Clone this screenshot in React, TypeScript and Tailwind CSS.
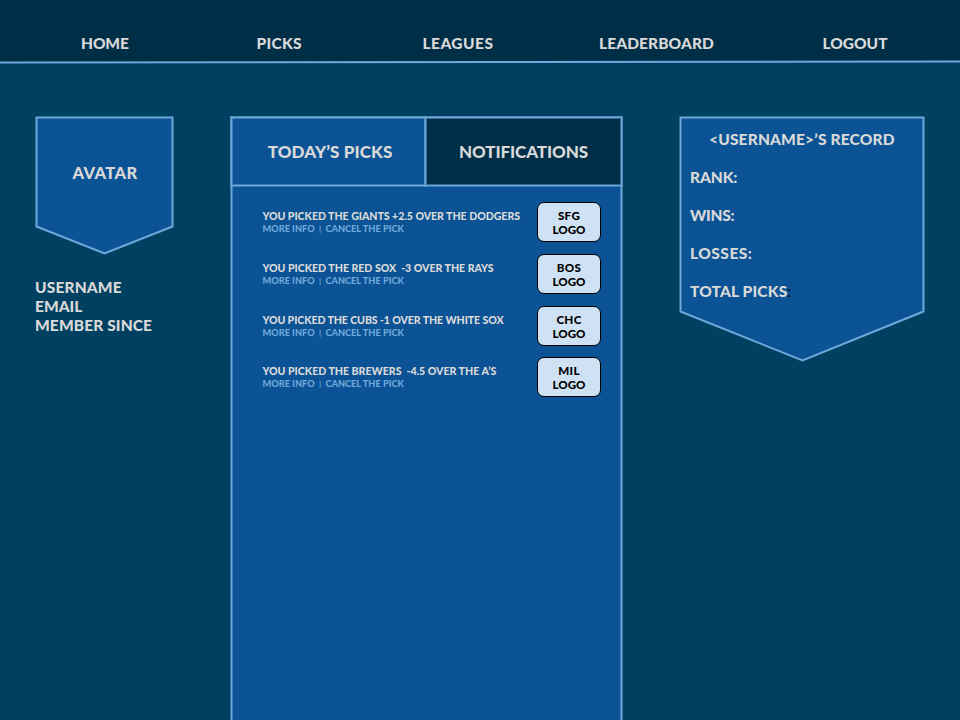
const nav = [
  { label: "HOME", cls: "ml-[81px] w-[175.5px] tracking-[-0.1px]" },
  { label: "PICKS", cls: "w-[166px] tracking-[0.3px]" },
  { label: "LEAGUES", cls: "w-[176.5px] tracking-[0.45px]" },
  { label: "LEADERBOARD", cls: "w-[223.5px] tracking-[0.1px]" },
  { label: "LOGOUT", cls: "" },
];

const picks = [
  { text: "YOU PICKED THE GIANTS +2.5 OVER THE DODGERS", team: "SFG", cls: "tracking-[-0.04px]" },
  { text: "YOU PICKED THE RED SOX  -3 OVER THE RAYS", team: "BOS", cls: "tracking-[-0.02px]" },
  { text: "YOU PICKED THE CUBS -1 OVER THE WHITE SOX", team: "CHC", cls: "tracking-[-0.1px]" },
  { text: "YOU PICKED THE BREWERS  -4.5 OVER THE A’S", team: "MIL", cls: "tracking-[-0.01px]" },
];

const record = [
  { label: "RANK:", cls: "tracking-[-0.1px]" },
  { label: "WINS:", cls: "tracking-[-0.3px]" },
  { label: "LOSSES:", cls: "tracking-[0.5px]" },
];

function Badge({ width, height, shoulder, tip }: { width: number; height: number; shoulder: number; tip: number }) {
  const r = width - 1.5;
  return (
    <svg className="absolute inset-0" width={width} height={height}>
      <path
        d={`M1.5 1.5H${r}V${shoulder}L${tip} ${height - 1.5}L1.5 ${shoulder}Z`}
        fill="#0b5394"
        stroke="#6fa8dc"
        strokeWidth="2"
      />
    </svg>
  );
}

export default function App() {
  return (
    <div className="flex h-[720px] w-[960px] flex-col overflow-hidden bg-[#004060] font-['Lato','Open_Sans',sans-serif] font-black text-[#d9d9d9]">
      <header className="relative h-[64px] shrink-0 bg-[#002e47]">
        <svg className="absolute inset-0" width="960" height="64" viewBox="0 0 960 64">
          <path d="M0 62.5L960 61.5V64H0Z" fill="#004060" />
          <path d="M0 62.5L960 61.5" stroke="#6fa8dc" strokeWidth="2" />
        </svg>
        <nav className="relative flex pt-[33px] text-[15.5px] leading-5">
          {nav.map((n) => (
            <a key={n.label} className={n.cls}>
              {n.label}
            </a>
          ))}
        </nav>
      </header>
      <main className="flex flex-1 pt-[52px]">
        <aside className="ml-[35px] w-[196px]">
          <div className="relative h-[139px] w-[139px]">
            <Badge width={139} height={139} shoulder={110.5} tip={69.5} />
            <div className="relative pl-px pt-[47px] text-center text-[16.5px] leading-5 tracking-[0.4px]">AVATAR</div>
          </div>
          <div className="mt-[23px] text-[15.5px] leading-[19.2px]">
            <div className="tracking-[0.15px]">USERNAME</div>
            <div>EMAIL</div>
            <div className="tracking-[0.12px]">MEMBER SINCE</div>
          </div>
        </aside>
        <section className="mt-px h-[610px] w-[391px] border border-[#6fa8dc] bg-[#0b5394] shadow-[0_0_0_1px_#6fa8dc80,inset_0_0_0_1px_#6fa8dc80]">
          <div className="-mx-px -mt-px flex h-[69px] text-[17px] leading-6">
            <div className="w-[195px] border border-[#6fa8dc] bg-[#0b5394] pl-[3px] pt-[22px] text-center tracking-[0.1px] shadow-[0_0_0_1px_#6fa8dc80,inset_0_0_0_1px_#6fa8dc80]">
              TODAY’S PICKS
            </div>
            <div className="-ml-px w-[197px] border border-[#6fa8dc] bg-[#002e47] pt-[22px] text-center tracking-[-0.1px] shadow-[0_0_0_1px_#6fa8dc80,inset_0_0_0_1px_#6fa8dc80]">
              NOTIFICATIONS
            </div>
          </div>
          <ul className="flex flex-col gap-3 pl-[30.5px] pr-5 pt-4">
            {picks.map((p) => (
              <li key={p.team} className="flex h-[39.8px] items-start justify-between">
                <div className="whitespace-pre pt-2">
                  <div className={"text-[10.6px] leading-[13px] " + p.cls}>{p.text}</div>
                  <div className="text-[9.2px] leading-[12px] text-[#6fa8dc]">
                    {"MORE INFO  "}
                    <span className="align-[0.5px] text-[8px] font-bold leading-none">|</span>
                    {"  CANCEL THE PICK"}
                  </div>
                </div>
                <div className="h-10 w-[64px] rounded-[7px] border border-black bg-[#cfe2f3] pt-[6px] text-center text-[11.6px] leading-[14px] text-black">
                  <div className="tracking-[0.3px]">{p.team}</div>
                  <div>LOGO</div>
                </div>
              </li>
            ))}
          </ul>
        </section>
        <aside className="relative ml-[57px] h-[246px] w-[246px]">
          <Badge width={246} height={246} shoulder={195.5} tip={123.5} />
          <div className="relative flex flex-col gap-[19px] pl-[11px] pt-[14px] text-[15.5px] leading-[19px]">
            <h2 className="ml-[19px] tracking-[0.17px]">&lt;USERNAME&gt;’S RECORD</h2>
            {record.map((r) => (
              <div key={r.label} className={r.cls}>
                {r.label}
              </div>
            ))}
            <div className="tracking-[0.15px]">
              TOTAL PICKS<span className="font-normal text-black">:</span>
            </div>
          </div>
        </aside>
      </main>
    </div>
  );
}
